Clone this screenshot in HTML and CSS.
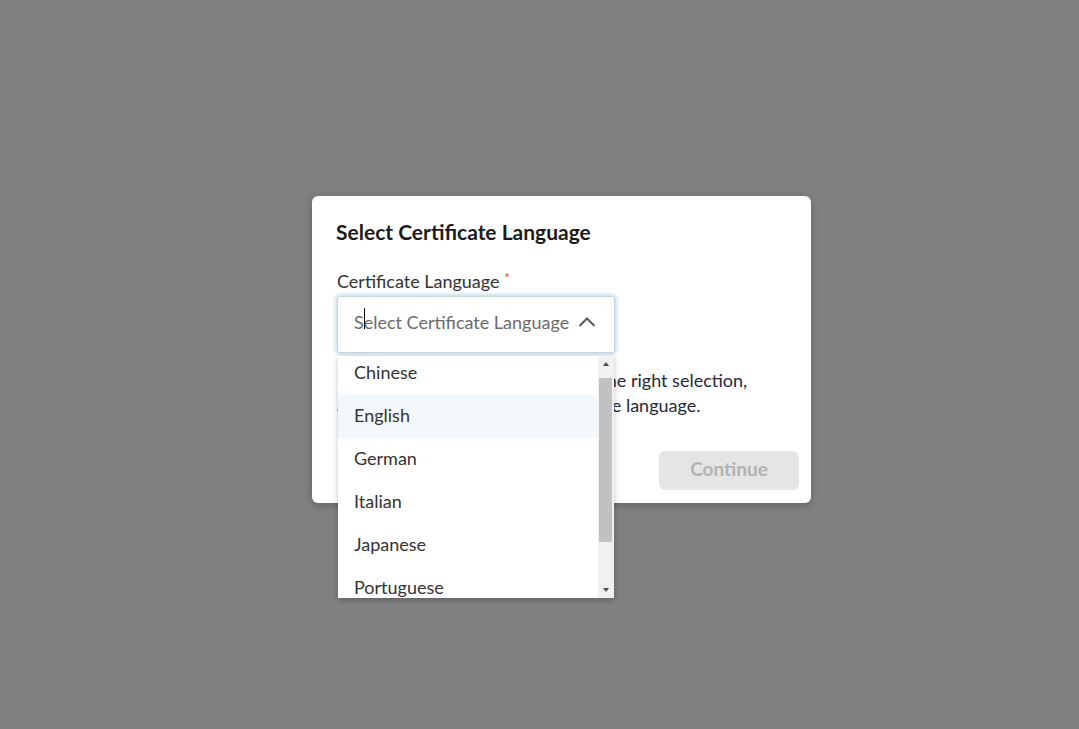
FILE: index.html
```html
<!DOCTYPE html>
<html>
<head>
  <title>Select Certificate Language</title>
  <link rel="stylesheet" href="styles.css">
</head>
<body>
  <div class="backdrop">
    <div class="modal">
      <h2 class="modal-title">Select Certificate Language</h2>

      <div class="field">
        <label class="field-label">Certificate Language <span class="req">*</span></label>
        <div class="select open">
          <span class="caret"></span>
          <span class="select-placeholder">Select Certificate Language</span>
          <svg class="chevron" width="18" height="12" viewBox="0 0 18 12">
            <path d="M1.5 10 L9 2.5 L16.5 10" fill="none" stroke="#5a5a5a" stroke-width="2"/>
          </svg>
        </div>

        <div class="dropdown">
          <ul class="options">
            <li class="option">Chinese</li>
            <li class="option hover">English</li>
            <li class="option">German</li>
            <li class="option">Italian</li>
            <li class="option">Japanese</li>
            <li class="option">Portuguese</li>
          </ul>
          <div class="scrollbar">
            <div class="sb-arrow up"></div>
            <div class="sb-track">
              <div class="sb-thumb"></div>
            </div>
            <div class="sb-arrow down"></div>
          </div>
        </div>
      </div>

      <p class="note">Please make sure you have made the right selection, as you cannot change the certificate language.</p>

      <div class="modal-footer">
        <button class="btn-continue" disabled>Continue</button>
      </div>
    </div>
  </div>
</body>
</html>
```

FILE: styles.css
```css
html, body {
  margin: 0;
  height: 100%;
}
body {
  background: #808080;
  font-family: Lato, "Open Sans", sans-serif;
  color: #333;
}
.backdrop {
  padding: 196px 0 0 312px;
}
.modal {
  width: 499px;
  height: 307px;
  box-sizing: border-box;
  background: #fff;
  border-radius: 6px;
  box-shadow: 0 2px 8px rgba(0, 0, 0, 0.25);
  padding: 23px 12px 13px 24px;
  display: flex;
  flex-direction: column;
}
.modal-title {
  margin: 0;
  font-size: 21px;
  font-weight: 700;
  line-height: 26px;
  color: #1b1b1b;
}
.field {
  position: relative;
  margin-top: 24px;
  width: 279px;
}
.field-label {
  display: block;
  font-size: 18px;
  line-height: 24px;
  color: #333;
  padding-left: 1px;
}
.req {
  color: #e0524c;
  font-size: 13px;
  vertical-align: top;
  position: relative;
  top: -3px;
}
.select {
  position: relative;
  margin-top: 3px;
  margin-left: 1px;
  height: 57px;
  box-sizing: border-box;
  border: 1px solid #c9d6de;
  border-radius: 3px;
  box-shadow: 0 0 4px 1px rgba(86, 150, 190, 0.45);
  display: flex;
  align-items: center;
  padding: 0 18px 5px 16px;
  background: #fff;
}
.select-placeholder {
  flex: 1;
  font-size: 18px;
  color: #6b6b6b;
}
.caret {
  position: absolute;
  left: 26px;
  top: 11px;
  width: 1px;
  height: 21px;
  background: #111;
}
.chevron {
  display: block;
}
.dropdown {
  position: absolute;
  left: 2px;
  top: 87px;
  width: 276px;
  height: 242px;
  background: #fff;
  box-shadow: 0 2px 6px rgba(0, 0, 0, 0.25);
  display: flex;
  overflow: hidden;
  z-index: 2;
}
.options {
  list-style: none;
  margin: -4px 0 0;
  padding: 0;
  flex: 1;
}
.option {
  height: 43px;
  line-height: 41px;
  padding-left: 16px;
  font-size: 18px;
  color: #333;
}
.option.hover {
  background: #f3f8fc;
}
.scrollbar {
  width: 16px;
  background: #f1f1f1;
  display: flex;
  flex-direction: column;
}
.sb-arrow {
  height: 17px;
  position: relative;
}
.sb-arrow::after {
  content: "";
  position: absolute;
  left: 5px;
  border-left: 3px solid transparent;
  border-right: 3px solid transparent;
}
.sb-arrow.up::after {
  top: 6px;
  border-bottom: 4px solid #505050;
}
.sb-arrow.down::after {
  top: 7px;
  border-top: 4px solid #505050;
}
.sb-track {
  flex: 1;
  padding: 5px 2px 0 1px;
}
.sb-thumb {
  height: 164px;
  background: #c1c1c1;
}
.note {
  margin: 15px 0 0;
  padding-left: 1px;
  max-width: 420px;
  font-size: 18px;
  line-height: 25px;
  color: #26293a;
}
.modal-footer {
  margin-top: auto;
  display: flex;
  justify-content: flex-end;
}
.btn-continue {
  width: 140px;
  height: 39px;
  padding: 0 0 5px;
  border: none;
  border-radius: 6px;
  background: #e5e5e5;
  color: #b3b3b3;
  font-family: Lato, sans-serif;
  font-size: 19px;
  font-weight: 700;
}
```
